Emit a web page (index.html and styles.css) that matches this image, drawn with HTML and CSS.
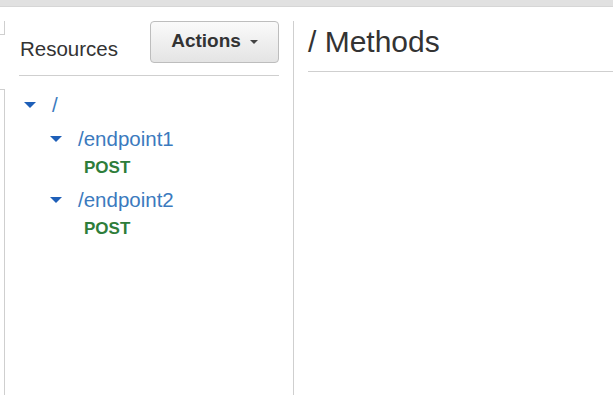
FILE: index.html
```html
<!DOCTYPE html>
<html>
<head>
<meta charset="utf-8">
<link rel="stylesheet" href="styles.css">
</head>
<body>
<div class="topbar"></div>
<div class="main">
  <div class="stub">
    <div class="stub-a"></div>
    <div class="stub-b"></div>
  </div>
  <aside class="resources">
    <div class="res-head">
      <h2 class="res-title">Resources</h2>
      <button class="btn-actions">Actions <span class="caret"></span></button>
    </div>
    <ul class="tree">
      <li class="node root"><span class="tcaret"></span><a class="path">/</a></li>
      <li class="node child"><span class="tcaret"></span><a class="path">/endpoint1</a></li>
      <li class="method">POST</li>
      <li class="node child"><span class="tcaret"></span><a class="path">/endpoint2</a></li>
      <li class="method">POST</li>
    </ul>
  </aside>
  <section class="methods">
    <h1 class="methods-title">/ Methods</h1>
  </section>
</div>
</body>
</html>
```

FILE: styles.css
```css
html, body {
  margin: 0;
  padding: 0;
  background: #fff;
  height: 100%;
  overflow: hidden;
}
body {
  font-family: "Liberation Sans", Arial, sans-serif;
  color: #333;
  display: flex;
  flex-direction: column;
}
.topbar {
  height: 6px;
  background: #e1e1e1;
  border-bottom: 1px solid #d6d6d6;
  flex: none;
}
.main {
  flex: 1;
  display: flex;
  margin-top: 14px;
}
.stub {
  width: 5px;
  box-sizing: border-box;
  display: flex;
  flex-direction: column;
  flex: none;
}
.stub-a {
  height: 14px;
  box-sizing: border-box;
  border-right: 1px solid #cfcfcf;
  border-bottom: 1px solid #cfcfcf;
}
.stub-b {
  margin-top: 54px;
  flex: 1;
  border-right: 1px solid #cfcfcf;
  border-top: 1px solid #cfcfcf;
}
.resources {
  width: 289px;
  box-sizing: border-box;
  padding: 0 14px 0 14px;
  border-right: 1px solid #cfcfcf;
  flex: none;
}
.res-head {
  display: flex;
  justify-content: space-between;
  align-items: flex-end;
  padding-bottom: 12px;
  border-bottom: 1px solid #cfcfcf;
}
.res-title {
  margin: 0 0 2px 1px;
  font-size: 20.5px;
  font-weight: normal;
  line-height: 24px;
  color: #333;
}
.btn-actions {
  width: 129px;
  height: 42px;
  box-sizing: border-box;
  border: 1px solid #bdbdbd;
  border-radius: 4px;
  background: linear-gradient(#fafafa, #e4e4e4);
  font-family: "Liberation Sans", Arial, sans-serif;
  font-size: 19px;
  font-weight: bold;
  color: #333;
  display: flex;
  align-items: center;
  justify-content: center;
  gap: 9px;
  padding: 0 0 3px 0;
}
.caret {
  width: 0;
  height: 0;
  border-left: 4px solid transparent;
  border-right: 4px solid transparent;
  border-top: 4px solid #444;
  margin-top: 3px;
}
.tree {
  list-style: none;
  margin: 0;
  padding: 14px 0 0 0;
}
.node {
  height: 30px;
  display: flex;
  align-items: center;
  font-size: 20.5px;
}
.node.root {
  padding-left: 5px;
}
.node.child {
  padding-left: 31px;
  margin-top: 4px;
}
.tcaret {
  width: 0;
  height: 0;
  border-left: 6px solid transparent;
  border-right: 6px solid transparent;
  border-top: 6px solid #1e5fb8;
  margin-right: 16px;
}
.path {
  color: #3b7abe;
  text-decoration: none;
}
.method {
  height: 26px;
  line-height: 26px;
  margin-top: 1px;
  padding-left: 65px;
  font-size: 17px;
  font-weight: bold;
  color: #2e7d3a;
}
.methods {
  flex: 1;
  min-width: 0;
}
.methods-title {
  margin: 3px 0 0 14px;
  padding-bottom: 11px;
  font-size: 30px;
  line-height: 36px;
  font-weight: normal;
  color: #333;
  border-bottom: 1px solid #cfcfcf;
  white-space: nowrap;
}
```
